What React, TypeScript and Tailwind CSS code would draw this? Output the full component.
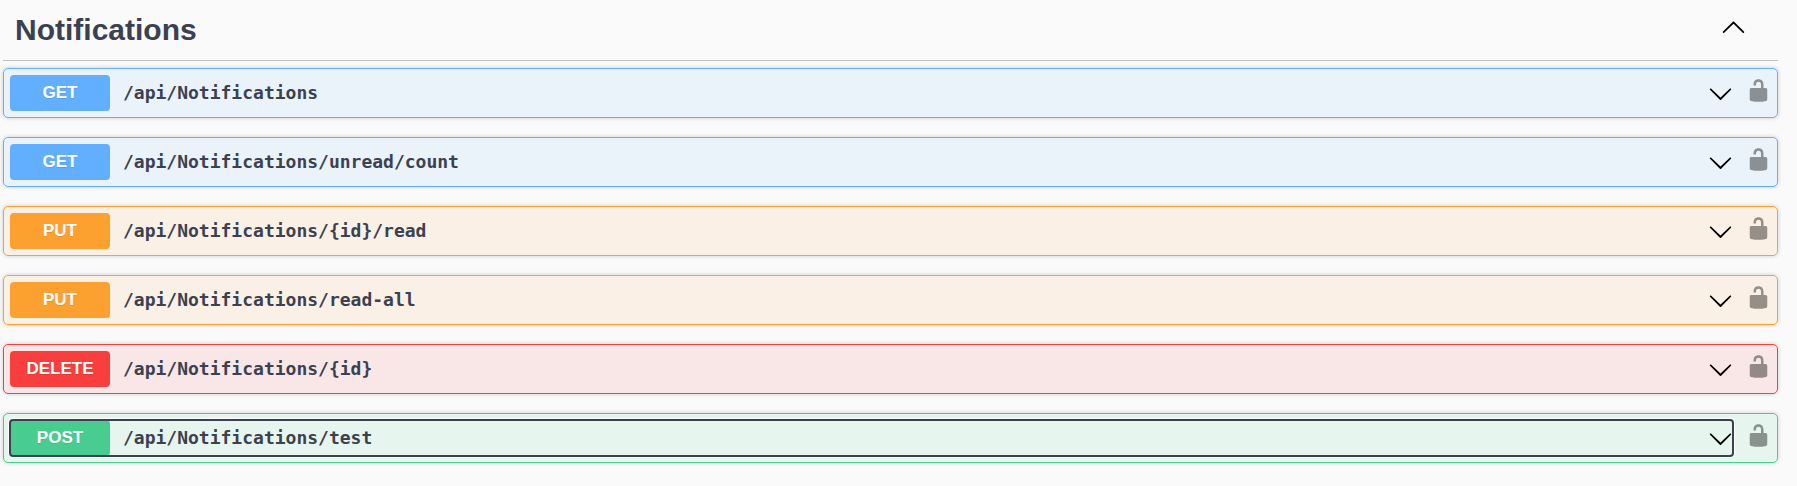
import { useState } from "react";

type Method = "GET" | "PUT" | "DELETE" | "POST";

const rowStyles: Record<Method, string> = {
  GET: "border-[#61affe] bg-[#61affe]/10",
  PUT: "border-[#fca130] bg-[#fca130]/10",
  DELETE: "border-[#f93e3e] bg-[#f93e3e]/10",
  POST: "border-[#49cc90] bg-[#49cc90]/10",
};

const badgeStyles: Record<Method, string> = {
  GET: "bg-[#61affe]",
  PUT: "bg-[#fca130]",
  DELETE: "bg-[#f93e3e]",
  POST: "bg-[#49cc90]",
};

const operations: { method: Method; path: string }[] = [
  { method: "GET", path: "/api/Notifications" },
  { method: "GET", path: "/api/Notifications/unread/count" },
  { method: "PUT", path: "/api/Notifications/{id}/read" },
  { method: "PUT", path: "/api/Notifications/read-all" },
  { method: "DELETE", path: "/api/Notifications/{id}" },
  { method: "POST", path: "/api/Notifications/test" },
];

function ArrowUp() {
  return (
    <svg viewBox="0 0 20 20" className="size-[25px] shrink-0" aria-hidden="true">
      <path d="M17.418 14.908c.272.268.709.268.979 0s.271-.701 0-.969l-7.908-7.83c-.27-.268-.707-.268-.979 0l-7.908 7.83c-.27.268-.27.701 0 .969.271.268.709.268.979 0L10 7.767z" />
    </svg>
  );
}

function ArrowDown() {
  return (
    <svg viewBox="0 0 20 20" className="size-[25px] shrink-0 fill-black" aria-hidden="true">
      <path d="M17.418 6.109c.272-.268.709-.268.979 0s.271.701 0 .969l-7.908 7.83c-.27.268-.707.268-.979 0l-7.908-7.83c-.27-.268-.27-.701 0-.969.271-.268.709-.268.979 0L10 13.25z" />
    </svg>
  );
}

function Unlocked() {
  return (
    <svg viewBox="0 0 20 20" className="size-[25px] opacity-40" aria-hidden="true">
      <path d="M15.8 8H14V5.6C14 2.703 12.665 1 10 1 7.334 1 6 2.703 6 5.6V6h2v-.801C8 3.754 8.797 3 10 3c1.203 0 2 .754 2 2.199V8H4c-.553 0-1 .646-1 1.199V17c0 .549.428 1.139.951 1.307l1.197.387C5.672 18.861 6.55 19 7.1 19h5.8c.549 0 1.428-.139 1.951-.307l1.196-.387c.524-.167.953-.757.953-1.306V9.199C17 8.646 16.352 8 15.8 8z" />
    </svg>
  );
}

function Operation({
  method,
  path,
  active,
  onSelect,
}: {
  method: Method;
  path: string;
  active: boolean;
  onSelect: () => void;
}) {
  return (
    <li
      className={`flex items-center gap-[13px] rounded-[5px] border p-1.5 shadow-[0_0_4px_rgba(0,0,0,0.19)] ${rowStyles[method]}`}
    >
      <button
        type="button"
        onClick={onSelect}
        className={`flex min-w-0 flex-1 cursor-pointer items-center gap-[13px] rounded-[3px] text-left ${
          active
            ? "shadow-[0_0_0_2px_#fff] outline-2 -outline-offset-1 outline-[#3b4151]"
            : "outline-none"
        }`}
      >
        <span
          className={`w-[100px] shrink-0 rounded-[4px] py-1.5 text-center text-[17px] leading-6 font-bold text-white [text-shadow:0_1px_0_rgba(0,0,0,0.1)] ${badgeStyles[method]}`}
        >
          {method}
        </span>
        <span className="min-w-0 flex-1 truncate font-['DejaVu_Sans_Mono',monospace] text-[18px] leading-6 font-bold">
          {path}
        </span>
        <ArrowDown />
      </button>
      <button type="button" aria-label="Authorize" className="cursor-pointer pb-1.5">
        <Unlocked />
      </button>
    </li>
  );
}

export default function App() {
  const [open, setOpen] = useState(true);
  const [selected, setSelected] = useState(5);

  return (
    <main className="min-h-screen bg-[#fafafa] pr-[19px] pl-[3px] font-['Liberation_Sans',Arial,sans-serif] text-[#3b4151]">
      <section>
        <header className="flex items-start justify-between border-b border-[#3b4151]/30 pr-8 pl-3">
          <h3 className="pt-1.5 pb-1.5 text-[30px] leading-[48px] font-bold">Notifications</h3>
          <button
            type="button"
            aria-label="Toggle section"
            aria-expanded={open}
            onClick={() => setOpen(!open)}
            className="cursor-pointer pt-[14px] text-black"
          >
            {open ? <ArrowUp /> : <ArrowDown />}
          </button>
        </header>
        {open && (
          <ul className="flex flex-col gap-[19px] pt-[7px]">
            {operations.map((op, i) => (
              <Operation
                key={op.method + op.path}
                method={op.method}
                path={op.path}
                active={selected === i}
                onSelect={() => setSelected(i)}
              />
            ))}
          </ul>
        )}
      </section>
    </main>
  );
}
